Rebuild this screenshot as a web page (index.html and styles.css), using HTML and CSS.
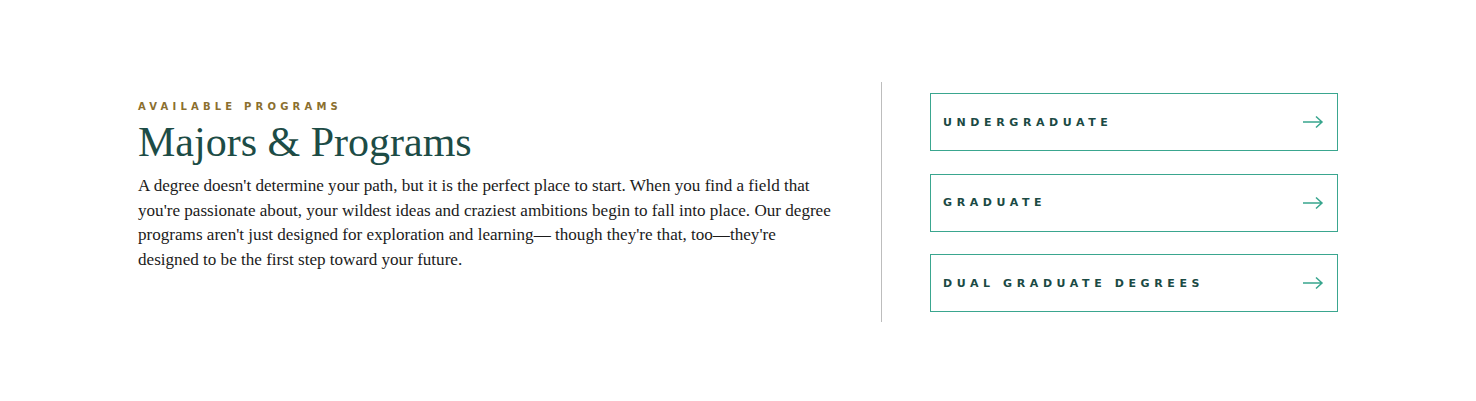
FILE: index.html
```html
<!DOCTYPE html>
<html lang="en">
<head>
<meta charset="utf-8">
<title>Majors &amp; Programs</title>
<link rel="stylesheet" href="styles.css">
</head>
<body>
<section class="programs">
  <div class="intro">
    <p class="eyebrow">Available Programs</p>
    <h2 class="title">Majors &amp; Programs</h2>
    <p class="lede">A degree doesn't determine your path, but it is the perfect place to start. When you find a field that you're passionate about, your wildest ideas and craziest ambitions begin to fall into place. Our degree programs aren't just designed for exploration and learning— though they're that, too—they're designed to be the first step toward your future.</p>
  </div>
  <nav class="links">
    <a class="link-card" href="#"><span>Undergraduate</span>
      <svg class="arrow" width="22" height="14" viewBox="0 0 22 14"><path d="M1 7H20M14 1.5L20 7L14 12.5" fill="none" stroke="#37a58d" stroke-width="1.5"/></svg></a>
    <a class="link-card" href="#"><span>Graduate</span>
      <svg class="arrow" width="22" height="14" viewBox="0 0 22 14"><path d="M1 7H20M14 1.5L20 7L14 12.5" fill="none" stroke="#37a58d" stroke-width="1.5"/></svg></a>
    <a class="link-card" href="#"><span>Dual Graduate Degrees</span>
      <svg class="arrow" width="22" height="14" viewBox="0 0 22 14"><path d="M1 7H20M14 1.5L20 7L14 12.5" fill="none" stroke="#37a58d" stroke-width="1.5"/></svg></a>
  </nav>
</section>
</body>
</html>
```
FILE: styles.css
```css
html, body {
  margin: 0;
  padding: 0;
  background: #ffffff;
}
body {
  font-family: "Liberation Serif", "Times New Roman", serif;
}
.programs {
  width: 1200px;
  margin: 82px auto 0;
  display: flex;
  align-items: stretch;
}
.intro {
  width: 694px;
  margin-right: 49px;
  padding-top: 18px;
}
.eyebrow {
  margin: 0;
  font-family: "DejaVu Sans", sans-serif;
  font-weight: 700;
  font-size: 10px;
  line-height: 14px;
  letter-spacing: 4.2px;
  text-transform: uppercase;
  color: #8b6f2f;
}
.title {
  margin: 5px 0 0;
  font-family: "Liberation Serif", serif;
  font-weight: 400;
  font-size: 42px;
  line-height: 46px;
  color: #1d4c46;
}
.lede {
  margin: 9px 0 0;
  font-size: 17.1px;
  line-height: 24.6px;
  color: #1b1b1b;
}
.links {
  width: 408px;
  border-left: 1px solid #bdbdbd;
  padding: 11px 0 10px 48px;
  display: flex;
  flex-direction: column;
  gap: 22.5px;
}
.link-card {
  height: 56px;
  border: 1px solid #3aa68f;
  display: flex;
  align-items: center;
  justify-content: space-between;
  padding: 0 13px 0 12px;
  text-decoration: none;
  font-family: "DejaVu Sans", sans-serif;
  font-weight: 700;
  font-size: 11px;
  letter-spacing: 4.6px;
  text-transform: uppercase;
  color: #1b4a44;
}
.arrow {
  display: block;
}
```
